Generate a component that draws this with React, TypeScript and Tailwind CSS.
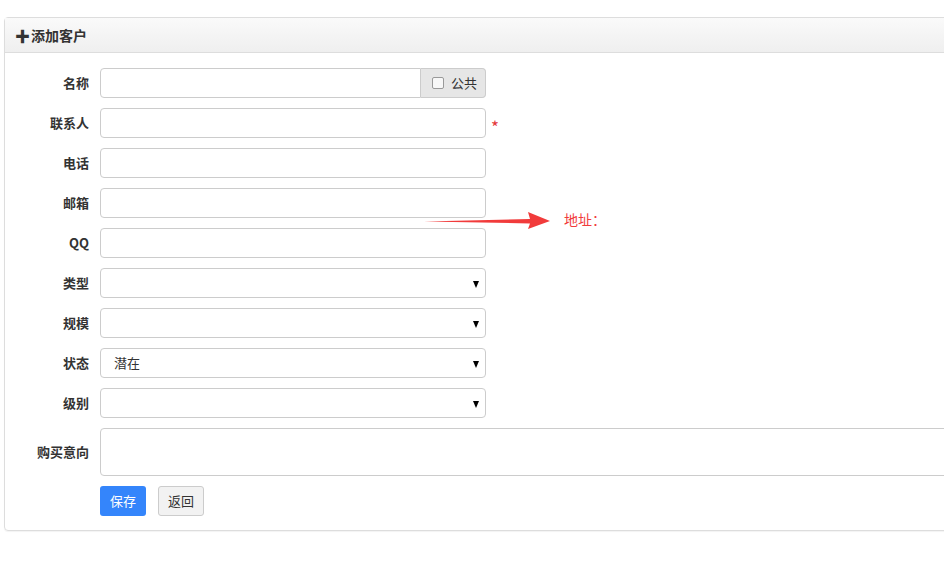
import React from 'react';

const font = { fontFamily: '"Noto Sans CJK SC", "Liberation Sans", sans-serif' };

const Label: React.FC<{ text: string }> = ({ text }) => (
  <label className="w-[84px] shrink-0 text-right text-[13px] font-bold text-[#333]">{text}</label>
);

const inputCls =
  'h-[30px] rounded-[4px] border border-[#ccc] bg-white px-3 text-[13px] text-[#333] outline-none';

const SelectBox: React.FC<{ value?: string }> = ({ value }) => (
  <div className={`${inputCls} relative flex w-[386px] items-center`}>
    <span className="pl-[1px]">{value}</span>
    <span className="absolute right-[6px] top-[12px] h-0 w-0 border-x-[3.5px] border-t-[7px] border-x-transparent border-t-black" />
  </div>
);

const Row: React.FC<{ label: string; children: React.ReactNode }> = ({ label, children }) => (
  <div className="flex items-center gap-[11px]">
    <Label text={label} />
    {children}
  </div>
);

export default function App() {
  return (
    <div className="h-[564px] w-[944px] overflow-hidden bg-white" style={font}>
      <div className="ml-[4px] mt-[17px] w-[1100px] rounded-[4px] border border-[#ddd] shadow-[0_1px_1px_rgba(0,0,0,0.05)]">
        <div className="flex h-[35px] items-center gap-[1px] border-b border-[#ddd] bg-gradient-to-b from-[#fafafa] to-[#efefef] pl-[10px] text-[14px] font-bold text-[#333]">
          <span className="text-[15px] leading-none">✚</span>
          <span>添加客户</span>
        </div>
        <div className="flex flex-col gap-[10px] pb-[14px] pt-[15px]">
          <Row label="名称">
            <div className="flex">
              <input className={`${inputCls} w-[321px] rounded-r-none`} />
              <div className="flex h-[30px] w-[65px] items-center gap-[7px] rounded-r-[4px] border border-l-0 border-[#ccc] bg-[#e6e6e6] pl-[11px] text-[13px] text-[#333]">
                <span className="h-[12px] w-[12px] rounded-[2px] border border-[#999] bg-[#f7f7f7]" />
                <span>公共</span>
              </div>
            </div>
          </Row>
          <Row label="联系人">
            <input className={`${inputCls} w-[386px]`} />
            <span className="-ml-[6px] mt-[6px] text-[17px] leading-none text-[#e4393c]">*</span>
          </Row>
          <Row label="电话">
            <input className={`${inputCls} w-[386px]`} />
          </Row>
          <Row label="邮箱">
            <input className={`${inputCls} w-[386px]`} />
          </Row>
          <Row label="QQ">
            <input className={`${inputCls} w-[386px]`} />
          </Row>
          <Row label="类型">
            <SelectBox />
          </Row>
          <Row label="规模">
            <SelectBox />
          </Row>
          <Row label="状态">
            <SelectBox value="潜在" />
          </Row>
          <Row label="级别">
            <SelectBox />
          </Row>
          <Row label="购买意向">
            <textarea className="h-[48px] flex-1 resize-none rounded-[4px] border border-[#ccc] bg-white" />
          </Row>
          <div className="flex gap-[12px] pl-[95px]">
            <button className="h-[30px] w-[46px] rounded-[3px] bg-[#3485fb] text-[13px] text-white">保存</button>
            <button className="h-[30px] w-[46px] rounded-[3px] border border-[#ccc] bg-[#f2f2f2] text-[13px] text-[#333]">返回</button>
          </div>
        </div>
      </div>
      <svg className="absolute left-[424px] top-[210px]" width="130" height="22" viewBox="0 0 130 22">
        <polygon points="0,11.5 106,9 104,2 126,11 104,19 106,13.5" fill="#f13b3b" />
      </svg>
      <div className="absolute left-[564px] top-[209px] text-[14px] text-[#f13b3b]">地址：</div>
    </div>
  );
}
